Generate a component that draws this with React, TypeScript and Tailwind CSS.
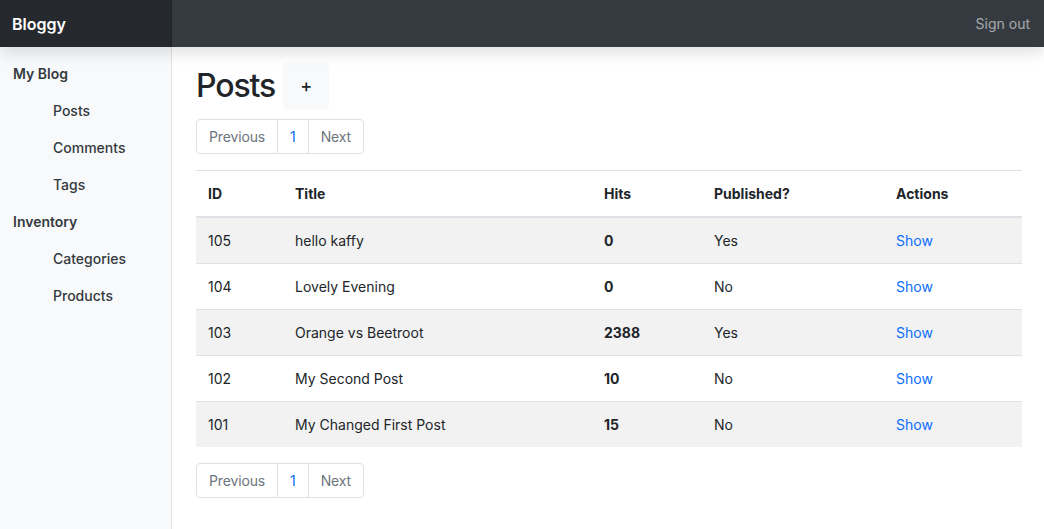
import React from "react"

type Post = { id: number; title: string; hits: number; published: boolean }

const posts: Post[] = [
  { id: 105, title: "hello kaffy", hits: 0, published: true },
  { id: 104, title: "Lovely Evening", hits: 0, published: false },
  { id: 103, title: "Orange vs Beetroot", hits: 2388, published: true },
  { id: 102, title: "My Second Post", hits: 10, published: false },
  { id: 101, title: "My Changed First Post", hits: 15, published: false },
]

const sections = [
  { name: "My Blog", items: ["Posts", "Comments", "Tags"] },
  { name: "Inventory", items: ["Categories", "Products"] },
]

function Pagination() {
  return (
    <div className="flex w-fit text-sm leading-[21px] tracking-[-0.01em]">
      <a className="rounded-l border border-[#dee2e6] px-3 py-1.5 text-[#6c757d]">Previous</a>
      <a className="-ml-px border border-[#dee2e6] px-3 py-1.5 text-[#0d6efd]">1</a>
      <a className="-ml-px rounded-r border border-[#dee2e6] px-3 py-1.5 text-[#6c757d]">Next</a>
    </div>
  )
}

export default function App() {
  return (
    <div className="flex min-h-[529px] flex-col bg-white text-[#212529]" style={{ fontFamily: "Inter, 'Noto Sans', sans-serif" }}>
      <header className="relative z-10 flex h-[47px] items-center bg-[#343a40] shadow-[0_6px_14px_rgba(0,0,0,0.12)]">
        <div className="flex h-full w-[172px] items-center border-r border-[#1f2327] bg-[#25292d] px-3 text-base font-semibold text-white">
          Bloggy
        </div>
        <div className="flex-1" />
        <a className="pr-[14px] text-sm text-white/55">Sign out</a>
      </header>

      <div className="flex flex-1">
        <nav className="w-[172px] shrink-0 border-r border-[#e0e3e6] bg-[#f8f9fa] pt-2 text-sm leading-[21px]">
          {sections.map((s) => (
            <div key={s.name}>
              <div className="px-[13px] py-2 font-semibold text-[#343a40]">{s.name}</div>
              {s.items.map((item) => (
                <div key={item} className="py-2 pl-[53px] font-medium text-[#343a40]">
                  {item}
                </div>
              ))}
            </div>
          ))}
        </nav>

        <main className="flex-1 pl-6 pr-[22px] pt-[15px]">
          <div className="mb-[9px] flex items-center gap-2">
            <h1 className="text-[32px] font-medium leading-[40px] tracking-[-0.035em]">Posts</h1>
            <button className="flex h-12 w-[46px] items-center justify-center rounded-md bg-[#f8f9fa] text-lg font-medium">+</button>
          </div>

          <Pagination />

          <table className="mb-4 mt-4 w-full border-t border-[#dee2e6] text-sm leading-[21px]">
            <thead>
              <tr className="border-b-2 border-[#dee2e6] text-left">
                <th className="w-[87px] px-3 py-3 font-bold">ID</th>
                <th className="w-[309px] px-3 py-3 font-bold">Title</th>
                <th className="w-[110px] px-3 py-3 font-bold">Hits</th>
                <th className="w-[182px] px-3 py-3 font-bold">Published?</th>
                <th className="px-3 py-3 font-bold">Actions</th>
              </tr>
            </thead>
            <tbody>
              {posts.map((p, i) => (
                <tr
                  key={p.id}
                  className={
                    i === posts.length - 1
                      ? "bg-[#f2f2f2]"
                      : i % 2 === 0
                        ? "border-b border-[#dee2e6] bg-[#f2f2f2]"
                        : "border-b border-[#dee2e6]"
                  }
                >
                  <td className="px-3 py-3">{p.id}</td>
                  <td className="px-3 py-3">{p.title}</td>
                  <td className="px-3 py-3 font-bold">{p.hits}</td>
                  <td className="px-3 py-3">{p.published ? "Yes" : "No"}</td>
                  <td className="px-3 py-3">
                    <a className="text-[#0d6efd]">Show</a>
                  </td>
                </tr>
              ))}
            </tbody>
          </table>

          <Pagination />
        </main>
      </div>
    </div>
  )
}
